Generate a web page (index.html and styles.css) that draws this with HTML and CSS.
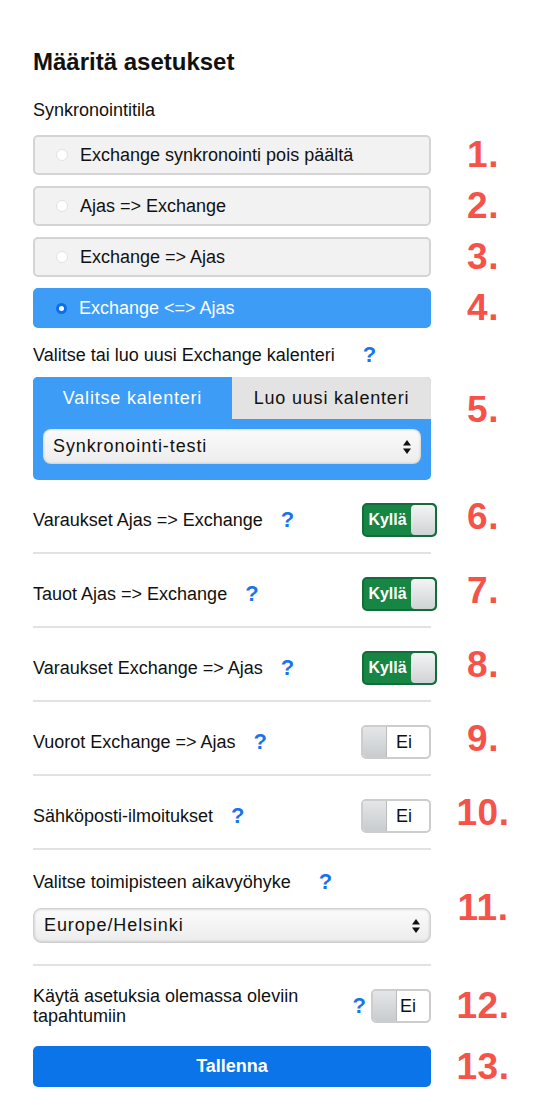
FILE: index.html
```html
<!DOCTYPE html>
<html lang="fi">
  <head>
    <meta charset="UTF-8" />
    <meta name="viewport" content="width=device-width, initial-scale=1.0" />
    <title>Määritä asetukset</title>
    <link rel="stylesheet" href="styles.css">
  </head>
  <body>
    <div class="page">
      <h2 class="title">Määritä asetukset</h2>
      <div class="label">Synkronointitila</div>

      <div class="item radio-item">
        <div class="body">
          <label class="radio"><span class="dot"></span>Exchange synkronointi pois päältä</label>
        </div>
        <div class="num">1.</div>
      </div>
      <div class="item radio-item">
        <div class="body">
          <label class="radio"><span class="dot"></span>Ajas =&gt; Exchange</label>
        </div>
        <div class="num">2.</div>
      </div>
      <div class="item radio-item">
        <div class="body">
          <label class="radio"><span class="dot"></span>Exchange =&gt; Ajas</label>
        </div>
        <div class="num">3.</div>
      </div>
      <div class="item radio-item">
        <div class="body">
          <label class="radio active"><span class="dot"></span>Exchange &lt;=&gt; Ajas</label>
        </div>
        <div class="num">4.</div>
      </div>

      <div class="item">
        <div class="body">
          <div class="label-row first">
            <span>Valitse tai luo uusi Exchange kalenteri</span>
            <span class="help wide">?</span>
          </div>
          <div class="tabs">
            <div class="tab-bar">
              <div class="tab active">Valitse kalenteri</div>
              <div class="tab">Luo uusi kalenteri</div>
            </div>
            <div class="tab-content">
              <div class="select">
                <span>Synkronointi-testi</span>
                <svg class="arrows" width="8" height="14" viewBox="0 0 8 14">
                  <path d="M4 0 L8 5.5 L0 5.5 Z M4 14 L8 8.5 L0 8.5 Z" fill="#111" />
                </svg>
              </div>
            </div>
          </div>
        </div>
        <div class="num">5.</div>
      </div>

      <div class="item">
        <div class="body row">
          <span class="text">Varaukset Ajas =&gt; Exchange</span>
          <span class="help">?</span>
          <div class="switch on"><span class="state">Kyllä</span><span class="knob"></span></div>
        </div>
        <div class="num">6.</div>
      </div>
      <div class="item">
        <div class="body row">
          <span class="text">Tauot Ajas =&gt; Exchange</span>
          <span class="help">?</span>
          <div class="switch on"><span class="state">Kyllä</span><span class="knob"></span></div>
        </div>
        <div class="num">7.</div>
      </div>
      <div class="item">
        <div class="body row">
          <span class="text">Varaukset Exchange =&gt; Ajas</span>
          <span class="help">?</span>
          <div class="switch on"><span class="state">Kyllä</span><span class="knob"></span></div>
        </div>
        <div class="num">8.</div>
      </div>
      <div class="item">
        <div class="body row">
          <span class="text">Vuorot Exchange =&gt; Ajas</span>
          <span class="help">?</span>
          <div class="switch"><span class="knob"></span><span class="state">Ei</span></div>
        </div>
        <div class="num">9.</div>
      </div>
      <div class="item">
        <div class="body row">
          <span class="text">Sähköposti-ilmoitukset</span>
          <span class="help">?</span>
          <div class="switch"><span class="knob"></span><span class="state">Ei</span></div>
        </div>
        <div class="num">10.</div>
      </div>

      <div class="item">
        <div class="body block">
          <div class="label-row">
            <span>Valitse toimipisteen aikavyöhyke</span>
            <span class="help wide">?</span>
          </div>
          <div class="select plain">
            <span>Europe/Helsinki</span>
            <svg class="arrows" width="8" height="14" viewBox="0 0 8 14">
              <path d="M4 0 L8 5.5 L0 5.5 Z M4 14 L8 8.5 L0 8.5 Z" fill="#111" />
            </svg>
          </div>
        </div>
        <div class="num">11.</div>
      </div>

      <div class="item">
        <div class="body row last">
          <span class="text grow">Käytä asetuksia olemassa oleviin tapahtumiin</span>
          <span class="help tight">?</span>
          <div class="switch small"><span class="knob"></span><span class="state">Ei</span></div>
        </div>
        <div class="num">12.</div>
      </div>

      <div class="item">
        <div class="body">
          <button class="save">Tallenna</button>
        </div>
        <div class="num">13.</div>
      </div>
    </div>
  </body>
</html>
```

FILE: styles.css
```css
* {
  margin: 0;
  padding: 0;
  box-sizing: border-box;
}
body {
  background: #fff;
  color: #111;
  font-family: "Liberation Sans", Arial, Helvetica, sans-serif;
  font-size: 18px;
}
.page {
  padding: 48px 0 0 33px;
  width: 536px;
}
.title {
  font-size: 24px;
  font-weight: bold;
  line-height: 28px;
  margin-bottom: 24px;
}
.label {
  line-height: 20px;
  margin-bottom: 15px;
}
.item {
  display: flex;
  align-items: center;
}
.body {
  width: 398px;
  flex: none;
}
.num {
  width: 104px;
  line-height: 40px;
  text-align: center;
  font-size: 37px;
  font-weight: bold;
  color: #f5534a;
  letter-spacing: 0.5px;
}
.radio-item {
  margin-bottom: 11px;
}
.radio {
  display: flex;
  align-items: center;
  height: 40px;
  padding-left: 21px;
  background: #f2f2f2;
  border: 2px solid #d4d4d4;
  border-radius: 5px;
}
.radio .dot {
  width: 12px;
  height: 12px;
  margin-right: 12px;
  border-radius: 50%;
  background: #fff;
  border: 1px solid #e2e2e2;
}
.radio.active {
  background: #3d9cf6;
  border-color: #3d9cf6;
  color: #fff;
}
.radio.active .dot {
  width: 11px;
  height: 11px;
  border: 3.5px solid #0a6fe8;
  background: #fff;
}
.label-row {
  display: flex;
  align-items: center;
  height: 20px;
}
.label-row.first {
  margin-top: 6px;
}
.help {
  color: #1a73e8;
  font-size: 22px;
  font-weight: bold;
  margin-left: 18px;
}
.help.wide {
  margin-left: 28px;
}
.tabs {
  margin-top: 12px;
  background: #3d9cf6;
  border-radius: 5px;
  overflow: hidden;
}
.tab-bar {
  display: flex;
  height: 42px;
}
.tab {
  flex: 1;
  display: flex;
  align-items: center;
  justify-content: center;
  letter-spacing: 0.8px;
  background: #e3e3e3;
}
.tab.active {
  background: #3d9cf6;
  color: #fff;
}
.tab-content {
  padding: 10px 10px 16px;
}
.select {
  display: flex;
  align-items: center;
  justify-content: space-between;
  height: 35px;
  padding: 0 10px;
  border-radius: 8px;
  letter-spacing: 0.9px;
  background: linear-gradient(#fbfbfb, #ececec);
  box-shadow: inset 0 0 3px rgba(0, 0, 0, 0.25);
}
.select.plain {
  margin-top: 16px;
  border: 1px solid #d0d0d0;
}
.row {
  display: flex;
  align-items: center;
  padding: 23px 0 15px;
  border-bottom: 2px solid #e2e2e2;
}
.row .switch {
  margin-left: auto;
}
.block {
  padding: 22px 0 21px;
  border-bottom: 2px solid #e2e2e2;
}
.row.last {
  border-bottom: none;
  padding: 20px 0;
}
.grow {
  flex: 1;
  line-height: 20px;
}
.help.tight {
  margin-left: 0;
  margin-right: 5px;
}
.switch {
  display: flex;
  width: 70px;
  height: 34px;
  border: 2px solid #cdcdcd;
  border-radius: 5px;
  background: #fff;
  overflow: hidden;
}
.switch .knob {
  width: 24px;
  background: linear-gradient(#e4e6e8, #c9ccce);
  border-right: 1px solid #bbb;
}
.switch .state {
  flex: 1;
  display: flex;
  align-items: center;
  padding-left: 9px;
}
.switch.on {
  width: 75px;
  margin-right: -6px;
  background: #178544;
  border-color: #136c39;
}
.switch.on .state {
  justify-content: center;
  padding-left: 0;
  color: #fff;
  font-weight: bold;
  font-size: 16px;
}
.switch.on .knob {
  border-right: none;
  border-radius: 4px;
  background: linear-gradient(#f4f4f4, #cfd3d5);
}
.switch.small {
  width: 60px;
  flex: none;
}
.switch.small .state {
  padding-left: 3px;
}
.save {
  width: 100%;
  height: 41px;
  border: none;
  border-radius: 5px;
  background: #0a74e8;
  color: #fff;
  font-family: inherit;
  font-size: 18px;
  font-weight: bold;
}
```
